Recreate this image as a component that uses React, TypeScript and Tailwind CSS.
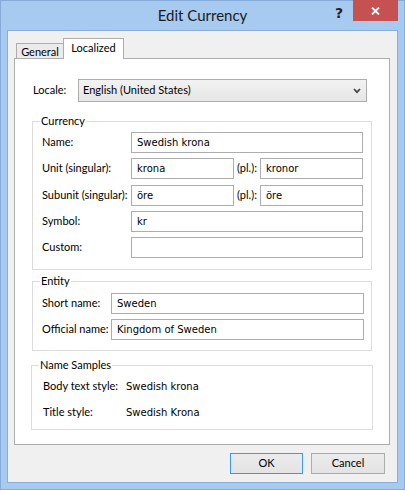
import React from "react";

const UI = "font-['Lato','Noto_Sans',sans-serif] text-[11px] whitespace-nowrap";
const TX = "font-['DejaVu_Sans',sans-serif] text-[10px] text-black";

function Input({ value, className = "" }: { value?: string; className?: string }) {
  return (
    <div className={`h-[21px] border border-[#abadb3] bg-white pl-[5px] flex items-center ${TX} ${className}`}>
      {value}
    </div>
  );
}

function Group({ title, className = "", children }: { title: string; className?: string; children: React.ReactNode }) {
  return (
    <fieldset className={`border border-[#dcdcdc] pl-[9px] ${className}`}>
      <legend className="-ml-[2px] px-[1px] h-[16px] leading-[16px] text-black">{title}</legend>
      {children}
    </fieldset>
  );
}

export default function App() {
  return (
    <div className={`w-[405px] h-[490px] bg-[#a6caf0] border border-[#86abd8] px-[6px] pb-[6px] flex flex-col ${UI}`}>
      {/* title bar */}
      <div className="h-[29px] grid grid-cols-[1fr_auto_1fr]">
        <div />
        <div className="flex items-center text-[15px] text-[#1a1a1a] pb-[1px]">Edit Currency</div>
        <div className="flex justify-end items-start">
          <div className="mt-[4px] mr-[10px] text-[14px] font-bold leading-[16px] text-[#222] font-['DejaVu_Sans',sans-serif]">?</div>
          <div className="-mt-px w-[45px] h-[21px] bg-[#c75050] flex items-center justify-center">
            <svg width="9" height="8" viewBox="0 0 9 8">
              <path d="M1 0.5 L8 7.5 M8 0.5 L1 7.5" stroke="white" strokeWidth="1.8" />
            </svg>
          </div>
        </div>
      </div>

      {/* client */}
      <div className="flex-1 border border-[#88aed9] bg-[#f0f0f0] px-[6px] pt-[7px] flex flex-col">
        {/* tabs */}
        <div className="h-[20px] flex items-end ml-[2px]">
          <div className="w-[48px] h-[15px] border-t border-l border-r border-[#adadad] bg-[#ebebeb] flex items-center justify-center text-black leading-none">
            General
          </div>
          <div className="-ml-px w-[61px] h-[21px] -mb-px relative z-10 border-t border-l border-r border-[#adadad] bg-white flex items-start justify-center pt-[2px] text-black leading-[14px]">
            Localized
          </div>
        </div>

        {/* panel */}
        <div className="h-[387px] border border-[#adadad] bg-white pt-[20px] mr-px">
          <div className="flex items-center pl-[18px]">
            <div className="w-[45px] text-black">Locale:</div>
            <div className="w-[289px] h-[23px] border border-[#acacac] bg-gradient-to-b from-[#f2f2f2] to-[#e6e6e6] flex items-center justify-between pl-[4px] pr-[5px] text-black">
              <span>English (United States)</span>
              <svg width="8" height="6" viewBox="0 0 8 6">
                <path d="M1 1 L4 4.2 L7 1" stroke="#444" strokeWidth="1.7" fill="none" />
              </svg>
            </div>
          </div>

          <div className="mx-[17px]">
            <Group title="Currency" className="mt-[11px] pt-[3px] pb-[11px] pr-[8px]">
              <div className="flex flex-col gap-[5px]">
                <div className="flex items-center">
                  <div className="w-[89px]">Name:</div>
                  <Input value="Swedish krona" className="flex-1" />
                </div>
                <div className="flex items-center">
                  <div className="w-[89px]">Unit (singular):</div>
                  <Input value="krona" className="w-[103px]" />
                  <div className="w-[26px] pl-[3px]">(pl.):</div>
                  <Input value="kronor" className="flex-1" />
                </div>
                <div className="flex items-center mt-px">
                  <div className="w-[89px]">Subunit (singular):</div>
                  <Input value="öre" className="w-[103px]" />
                  <div className="w-[26px] pl-[3px]">(pl.):</div>
                  <Input value="öre" className="flex-1" />
                </div>
                <div className="flex items-center">
                  <div className="w-[89px]">Symbol:</div>
                  <Input value="kr" className="flex-1" />
                </div>
                <div className="flex items-center">
                  <div className="w-[89px]">Custom:</div>
                  <Input className="flex-1" />
                </div>
              </div>
            </Group>

            <Group title="Entity" className="mt-[3px] pt-[4px] pb-[10px] pr-[7px]">
              <div className="flex flex-col gap-[5px]">
                <div className="flex items-center">
                  <div className="w-[69px]">Short name:</div>
                  <Input value="Sweden" className="flex-1" />
                </div>
                <div className="flex items-center">
                  <div className="w-[69px]">Official name:</div>
                  <Input value="Kingdom of Sweden" className="flex-1" />
                </div>
              </div>
            </Group>

            <Group title="Name Samples" className="mt-[6px] pb-[4px] -mx-px">
              <div className="flex flex-col pl-[2px]">
                <div className="h-[26px] flex items-center">
                  <div className="w-[83px]">Body text style:</div>
                  <div className={TX}>Swedish krona</div>
                </div>
                <div className="h-[26px] flex items-center">
                  <div className="w-[83px]">Title style:</div>
                  <div className={TX}>Swedish Krona</div>
                </div>
              </div>
            </Group>
          </div>
        </div>

        {/* buttons */}
        <div className="mt-[8px] flex justify-end gap-[8px] pr-[6px]">
          <div className="w-[73px] h-[21px] border border-[#3399ff] bg-gradient-to-b from-[#ececec] to-[#e3e3e3] flex items-center justify-center text-black">
            OK
          </div>
          <div className="w-[74px] h-[21px] border border-[#acacac] bg-gradient-to-b from-[#ececec] to-[#e3e3e3] flex items-center justify-center text-black">
            Cancel
          </div>
        </div>
      </div>
    </div>
  );
}
